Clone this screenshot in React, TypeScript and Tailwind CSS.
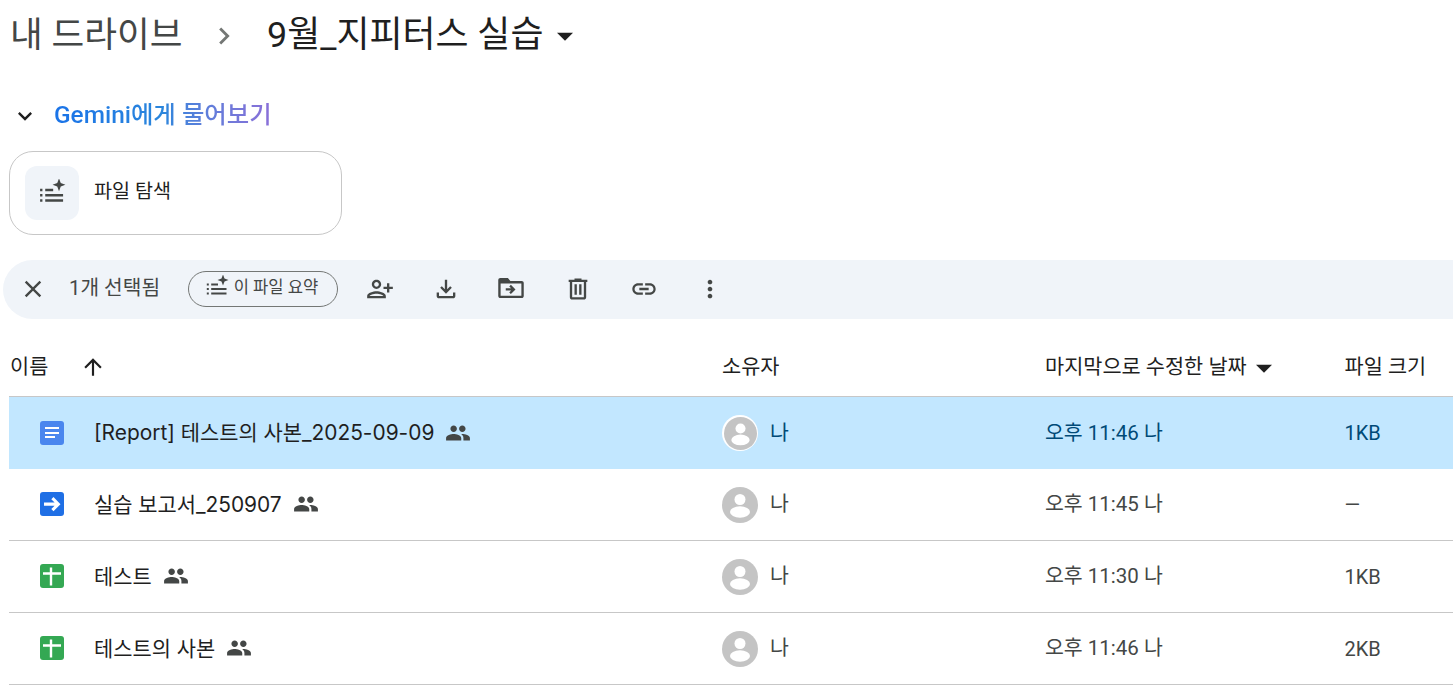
import React from 'react';

const FONT = "font-['Roboto','Noto_Sans_CJK_KR',sans-serif]";

function Icon({ d, className = '', flip = false }: { d: string; className?: string; flip?: boolean }) {
  return (
    <svg viewBox="0 0 24 24" className={className} fill="currentColor" fillRule="evenodd">
      <path d={d} transform={flip ? 'matrix(-1 0 0 1 24 0)' : undefined} />
    </svg>
  );
}

const paths = {
  close: 'M19 6.41L17.59 5 12 10.59 6.41 5 5 6.41 10.59 12 5 17.59 6.41 19 12 13.41 17.59 19 19 17.59 13.41 12z',
  addPerson: 'M15 12c2.21 0 4-1.79 4-4s-1.79-4-4-4-4 1.79-4 4 1.79 4 4 4zm0-6c1.1 0 2 .9 2 2s-.9 2-2 2-2-.9-2-2 .9-2 2-2zm0 8c-2.67 0-8 1.34-8 4v2h16v-2c0-2.66-5.33-4-8-4zm-6 4c.22-.72 3.31-2 6-2 2.7 0 5.8 1.29 6 2H9zm-3-3v-3h3v-2H6V7H4v3H1v2h3v3h2z',
  download: 'M18 15v3H6v-3H4v3c0 1.1.9 2 2 2h12c1.1 0 2-.9 2-2v-3h-2zm-1-4l-1.41-1.41L13 12.17V4h-2v8.17L8.41 9.59 7 11l5 5 5-5z',
  move: 'M3.500 4h6l2 2.400h9c1 0 1.700.7 1.700 1.700v10.200c0 1-.7 1.700-1.700 1.700h-17c-1 0-1.700-.7-1.700-1.700V5.700C1.800 4.700 2.500 4 3.500 4zM3.700 8.300v9.800h16.600V8.300zM12.100 12.200H7.800v1.800h4.300l-1.500 1.500 1.300 1.300 3.700-3.700-3.700-3.700-1.300 1.300z',
  trash: 'M15 4V3H9v1H4v2h1v13c0 1.1.9 2 2 2h10c1.100 0 2-.9 2-2V6h1V4h-5zm2 15H7V6h10v13zM9 8h2v9H9zm4 0h2v9h-2z',
  link: 'M3.9 12c0-1.71 1.39-3.1 3.1-3.1h4V7H7c-2.76 0-5 2.24-5 5s2.24 5 5 5h4v-1.9H7c-1.71 0-3.1-1.39-3.1-3.1zM8 13h8v-2H8v2zm9-6h-4v1.9h4c1.71 0 3.1 1.39 3.1 3.1s-1.39 3.1-3.1 3.1h-4V17h4c2.76 0 5-2.24 5-5s-2.24-5-5-5z',
  more: 'M12 8c1.1 0 2-.9 2-2s-.9-2-2-2-2 .9-2 2 .9 2 2 2zm0 2c-1.1 0-2 .9-2 2s.9 2 2 2 2-.9 2-2-.9-2-2-2zm0 6c-1.1 0-2 .9-2 2s.9 2 2 2 2-.9 2-2-.9-2-2-2z',
  up: 'M4 12l1.41 1.41L11 7.83V20h2V7.83l5.58 5.59L20 12l-8-8-8 8z',
  people: 'M16 11c1.66 0 2.99-1.34 2.99-3S17.66 5 16 5c-1.66 0-3 1.34-3 3s1.34 3 3 3zm-8 0c1.66 0 2.99-1.34 2.99-3S9.66 5 8 5C6.34 5 5 6.34 5 8s1.34 3 3 3zm0 2c-2.33 0-7 1.17-7 3.5V19h14v-2.5c0-2.33-4.67-3.5-7-3.5zm8 0c-.29 0-.62.02-.97.05 1.16.84 1.97 1.97 1.97 3.45V19h6v-2.5c0-2.33-4.67-3.5-7-3.5z',
  chevronDown: 'M7.41 8.59L12 13.17l4.59-4.58L18 10l-6 6-6-6z',
  chevronRight: 'M8.59 16.59L13.17 12 8.59 7.41 10 6l6 6-6 6z',
  caret: 'M6 9.500h12l-6 6z',
};

function SparkList({ className = '' }: { className?: string }) {
  return (
    <svg viewBox="0 0 24 24" className={className} fill="currentColor">
      <path d="M1.800 8.400h2v2h-2zM1.800 12.900h2v2h-2zM1.800 17.400h2v2h-2zM6.200 8.400H13v2H6.200zM6.200 12.900h15.300v2H6.200zM6.200 17.400h15.300v2H6.200z" />
      <path d="M18 -0.500l1.500 4 4 1.500-4 1.500-1.500 4-1.500-4-4-1.500 4-1.500z" />
    </svg>
  );
}

function FileIcon({ kind }: { kind: 'doc' | 'slides' | 'sheet' }) {
  if (kind === 'doc') {
    return (
      <div className="w-6 h-6 rounded-[3px] bg-[#4a86ee] flex flex-col justify-center gap-[2.5px] pl-[5px]">
        <div className="w-[14px] h-[2px] bg-white" />
        <div className="w-[14px] h-[2px] bg-white" />
        <div className="w-[10px] h-[2px] bg-white" />
      </div>
    );
  }
  if (kind === 'slides') {
    return (
      <div className="w-6 h-6 rounded-[3px] bg-[#1f6fe5]">
        <svg viewBox="0 0 24 24" className="w-6 h-6 text-white" fill="currentColor">
          <path d="M13.500 5l-2.200 2.200 3.300 3.300H4v3.200h10.600l-3.300 3.300 2.200 2.200 7-7z" />
        </svg>
      </div>
    );
  }
  return (
    <div className="w-6 h-6 rounded-[3px] bg-[#34a853]">
      <svg viewBox="0 0 24 24" className="w-6 h-6 text-white" fill="currentColor">
        <path d="M3 8.300h6.800V3.500h2.400v4.800H21v2.400h-8.800V21.500H9.800V10.700H3z" />
      </svg>
    </div>
  );
}

function Avatar({ ring }: { ring?: boolean }) {
  return (
    <div className={`w-9 h-9 rounded-full shrink-0 ${ring ? 'bg-white p-[1.5px]' : ''}`}>
      <svg viewBox="0 0 36 36" className="w-full h-full">
        <circle cx="18" cy="18" r="18" fill="#c4c4c4" />
        <circle cx="18" cy="12.500" r="5.500" fill="#ffffff" />
        <ellipse cx="18" cy="25" rx="10" ry="5.800" fill="#ffffff" />
      </svg>
    </div>
  );
}

const rows = [
  { name: '[Report] 테스트의 사본_2025-09-09', kind: 'doc' as const, time: '오후 11:46 나', size: '1KB', selected: true },
  { name: '실습 보고서_250907', kind: 'slides' as const, time: '오후 11:45 나', size: '—', selected: false },
  { name: '테스트', kind: 'sheet' as const, time: '오후 11:30 나', size: '1KB', selected: false },
  { name: '테스트의 사본', kind: 'sheet' as const, time: '오후 11:46 나', size: '2KB', selected: false },
];

const COLS = 'grid grid-cols-[713px_323px_299.5px_1fr]';

export default function App() {
  const tools = [paths.addPerson, paths.download, paths.move, paths.trash, paths.link, paths.more];

  return (
    <div className={`w-[1453px] h-[693px] overflow-hidden bg-white text-[#1f1f1f] ${FONT}`}>
      <div className="h-[72px] flex items-center pl-[10px]">
        <span className="text-[35.6px] leading-none text-[#444746] w-[190px] whitespace-nowrap">내 드라이브</span>
        <Icon d={paths.chevronRight} className="w-[34px] h-[34px] text-[#747775] ml-[7px]" />
        <span className="text-[35.9px] leading-none ml-[26px] whitespace-nowrap">9월_지피터스 실습</span>
        <Icon d={paths.caret} className="w-8 h-8 ml-[6px]" />
      </div>

      <div className="h-[79px] pt-[8px] flex items-center pl-[11px]">
        <Icon d={paths.chevronDown} className="w-7 h-7" />
        <span className="ml-[15px] text-[24.4px] leading-none font-medium bg-gradient-to-r from-[#1a73e8] via-[#2b86dc] to-[#8a6fd8] bg-clip-text text-transparent whitespace-nowrap">
          Gemini에게 물어보기
        </span>
      </div>

      <div className="ml-[9px] w-[333px] h-[84px] rounded-[24px] border border-[#c7c7c7] flex items-center pl-[15px]">
        <div className="w-[54px] h-[54px] rounded-[12px] bg-[#f0f4f9] flex items-center justify-center">
          <SparkList className="w-7 h-7 text-[#444746]" />
        </div>
        <span className="ml-[15px] mb-[2px] text-[19.6px]">파일 탐색</span>
      </div>

      <div className="mt-[25px] ml-[3px] h-[59px] rounded-l-full bg-[#f0f4f9] flex items-center pl-[16px] pb-[2px] text-[#444746]">
        <Icon d={paths.close} className="w-7 h-7" />
        <span className="ml-[22px] w-[91px] text-[20.3px] whitespace-nowrap">1개 선택됨</span>
        <div className="ml-[28px] w-[150px] h-[36px] rounded-full border border-[#747775] flex items-center justify-center gap-[5px] text-[16.6px]">
          <SparkList className="w-[24px] h-[24px] mb-[3px] -ml-[3px]" />
          <span className="whitespace-nowrap">이 파일 요약</span>
        </div>
        <div className="ml-[9px] flex items-center">
          {tools.map((d, i) => (
            <div key={i} className="w-[66px] flex justify-center">
              <Icon d={d} className={i === 2 ? 'w-[30px] h-[30px] mr-[2px] mb-[1px]' : 'w-[28px] h-[28px]'} flip={i === 0} />
            </div>
          ))}
        </div>
      </div>

      <div className={`${COLS} mt-[21px] ml-[9px] h-[57px] items-center text-[20.8px] text-[#1f1f1f] border-b border-[#c7c7c7]`}>
        <div className="flex items-center pl-px">
          <span>이름</span>
          <Icon d={paths.up} className="w-[26px] h-[26px] ml-[32px] mb-[3px]" />
        </div>
        <span>소유자</span>
        <div className="flex items-center">
          <span className="whitespace-nowrap">마지막으로 수정한 날짜</span>
          <Icon d={paths.caret} className="w-8 h-8 ml-px" />
        </div>
        <span className="whitespace-nowrap">파일 크기</span>
      </div>

      <div className="ml-[9px]">
        {rows.map((r) => (
          <div
            key={r.name}
            className={`${COLS} h-[72px] items-center text-[20.5px] ${r.selected ? 'bg-[#c2e7ff] text-[#1f1f1f]' : 'border-b border-[#c7c7c7]'}`}
          >
            <div className="flex items-center pl-[31px]">
              <FileIcon kind={r.kind} />
              <span className="ml-[30px] whitespace-nowrap text-[20.9px] font-['Inter','Noto_Sans_CJK_KR',sans-serif]">{r.name}</span>
              <Icon d={paths.people} className="w-[26px] h-[26px] ml-[11px] text-[#444746]" />
            </div>
            <div className={`flex items-center gap-[12px] ${r.selected ? 'text-[#004a77]' : 'text-[#444746]'}`}>
              <Avatar ring={r.selected} />
              <span>나</span>
            </div>
            <span className={`whitespace-nowrap ${r.selected ? 'text-[#004a77]' : 'text-[#444746]'}`}>{r.time}</span>
            <span className={`text-[20px] ${r.selected ? 'text-[#004a77]' : 'text-[#444746]'}`}>{r.size}</span>
          </div>
        ))}
      </div>
    </div>
  );
}
